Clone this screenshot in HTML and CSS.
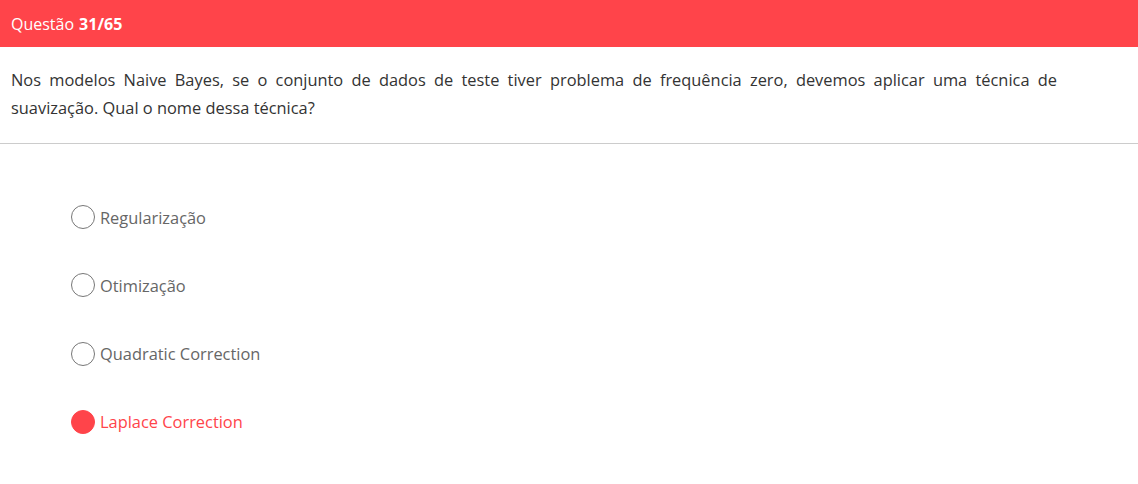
FILE: index.html
```html
<!DOCTYPE html>
<html lang="pt">
<head>
<meta charset="utf-8">
<link rel="stylesheet" href="styles.css">
</head>
<body>
<header class="bar">Questão <strong>31/65</strong></header>
<p class="question">Nos modelos Naive Bayes, se o conjunto de dados de teste tiver problema de frequência zero, devemos aplicar uma técnica de suavização. Qual o nome dessa técnica?</p>
<ul class="options">
  <li class="option"><span class="radio"></span><span class="label">Regularização</span></li>
  <li class="option"><span class="radio"></span><span class="label">Otimização</span></li>
  <li class="option"><span class="radio"></span><span class="label">Quadratic Correction</span></li>
  <li class="option selected"><span class="radio"></span><span class="label">Laplace Correction</span></li>
</ul>
</body>
</html>
```
FILE: styles.css
```css
html, body {
  margin: 0;
  padding: 0;
  background: #fff;
  font-family: "Open Sans", "Noto Sans", sans-serif;
}
.bar {
  height: 47px;
  background: #ff444a;
  color: #fff;
  font-size: 16px;
  display: flex;
  align-items: center;
  gap: 5px;
  padding-left: 11px;
  box-sizing: border-box;
}
.bar strong { font-weight: 700; }
.question {
  margin: 0;
  padding: 19px 81px 21px 11px;
  font-size: 16.4px;
  line-height: 28px;
  color: #333;
  text-align: justify;
  border-bottom: 1px solid #cccccc;
}
.options {
  list-style: none;
  margin: 0;
  padding: 61px 0 0 71px;
  display: flex;
  flex-direction: column;
  gap: 44.3px;
}
.option {
  display: flex;
  align-items: center;
  gap: 5px;
  height: 24px;
  font-size: 16.4px;
  color: #666;
}
.radio {
  width: 24px;
  height: 24px;
  box-sizing: border-box;
  border: 1px solid #777;
  border-radius: 50%;
  flex: none;
}
.selected { color: #ff444a; }
.selected .radio { background: #ff444a; border-color: #ff444a; }
```
